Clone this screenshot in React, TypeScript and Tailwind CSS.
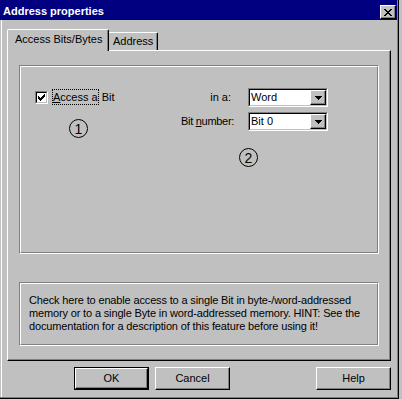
const raised = "border-t border-l border-t-white border-l-white border-r border-b border-r-black border-b-black shadow-[inset_-1px_-1px_0_#808080]";

const CheckMark = () => (
  <svg width="7" height="7" viewBox="0 0 7 7" shapeRendering="crispEdges">
    <rect x="6" y="0" width="1" height="1" fill="#000" />
    <rect x="5" y="1" width="2" height="1" fill="#000" />
    <rect x="0" y="2" width="1" height="1" fill="#000" />
    <rect x="4" y="2" width="3" height="1" fill="#000" />
    <rect x="0" y="3" width="2" height="1" fill="#000" />
    <rect x="3" y="3" width="3" height="1" fill="#000" />
    <rect x="0" y="4" width="5" height="1" fill="#000" />
    <rect x="1" y="5" width="3" height="1" fill="#000" />
    <rect x="2" y="6" width="1" height="1" fill="#000" />
  </svg>
);

const Combo = ({ value }: { value: string }) => (
  <div className="w-[80px] h-[19px] border-t border-l border-[#808080] border-r-white border-b-white border-r border-b">
    <div className="h-full border-t border-l border-t-black border-l-black border-r border-b border-r-[#c0c0c0] border-b-[#c0c0c0] bg-white flex">
      <div className="flex-1 pl-[1px] leading-[15px]">{value}</div>
      <div className={`w-[16px] h-[15px] bg-[#c0c0c0] flex items-center justify-center ${raised}`}>
        <svg width="7" height="4" viewBox="0 0 7 4" shapeRendering="crispEdges">
          <rect x="0" y="0" width="7" height="1" fill="#000" />
          <rect x="1" y="1" width="5" height="1" fill="#000" />
          <rect x="2" y="2" width="3" height="1" fill="#000" />
          <rect x="3" y="3" width="1" height="1" fill="#000" />
        </svg>
      </div>
    </div>
  </div>
);

const Circled = ({ n }: { n: string }) => (
  <div className="w-[19px] h-[19px] rounded-full border border-black flex items-center justify-center text-[14px] leading-none">
    {n}
  </div>
);

const Button = ({ label, isDefault }: { label: string; isDefault?: boolean }) =>
  isDefault ? (
    <div className="w-[75px] h-[23px] border border-black">
      <div className={`h-full flex items-center justify-center ${raised}`}>{label}</div>
    </div>
  ) : (
    <div className={`w-[75px] h-[23px] flex items-center justify-center ${raised}`}>{label}</div>
  );

export default function App() {
  return (
    <div className="w-[402px] h-[399px] bg-[#c0c0c0] overflow-hidden text-[11px] leading-[13px] text-black font-['Liberation_Sans',Arial,sans-serif]">
      <div className="w-[399px] h-[399px] border-r border-b border-black">
        <div className="h-full flex flex-col border-r border-b border-[#808080]">
          {/* Title bar */}
          <div className="h-[20px] bg-[#000080] flex items-start justify-between pl-[3px] pr-[1px]">
            <div className="pt-[5px] text-white font-bold">Address properties</div>
            <div className={`mt-[5px] w-[16px] h-[14px] bg-[#c0c0c0] flex items-center justify-center ${raised}`}>
              <svg width="8" height="7" viewBox="0 0 8 7" shapeRendering="crispEdges">
                <path d="M0 0h2v1h-2zM6 0h2v1h-2zM1 1h2v1h-2zM5 1h2v1h-2zM2 2h4v1h-4zM3 3h2v1h-2zM2 4h4v1h-4zM1 5h2v1h-2zM5 5h2v1h-2zM0 6h2v1h-2zM6 6h2v1h-2z" fill="#000" />
              </svg>
            </div>
          </div>

          {/* Body */}
          <div className="flex-1 ml-[1px] border-l border-white flex flex-col pt-[9px] pl-[5px] pr-[6px]">
            {/* Tabs */}
            <div className="flex items-end h-[21px]">
              <div className="relative z-10 -mb-[1px] w-[102px] h-[22px] bg-[#c0c0c0] border-l border-t border-white border-r border-r-black rounded-t-[2px] shadow-[inset_-1px_0_0_#808080] pl-[7px] pt-[3px]">
                Access Bits/Bytes
              </div>
              <div className="w-[49px] h-[18px] border-t border-white border-r border-r-black rounded-tr-[2px] shadow-[inset_-1px_0_0_#808080] pl-[4px] pt-[2px]">
                Address
              </div>
            </div>

            {/* Panel */}
            <div className="w-[384px] h-[311px] border-l border-t border-white border-r border-b border-r-black border-b-black shadow-[inset_-1px_-1px_0_#808080] pl-[11px] pt-[14px] flex flex-col">
              <div className="w-[360px] h-[189px] border-t border-l border-[#808080] border-r border-b border-r-white border-b-white">
                <div className="h-full border-t border-l border-white border-r border-b border-r-[#808080] border-b-[#808080] flex">
                  {/* Left column */}
                  <div className="w-[149px] pl-[14px] pt-[22px] flex flex-col">
                    <div className="flex items-start gap-[4px]">
                      <div className="mt-[2px] w-[13px] h-[13px] border-t border-l border-[#808080] border-r border-b border-r-white border-b-white">
                        <div className="h-full border-t border-l border-t-black border-l-black border-r border-b border-r-[#c0c0c0] border-b-[#c0c0c0] bg-white flex items-center justify-center">
                          <CheckMark />
                        </div>
                      </div>
                      <div className="flex">
                        <span className="border border-dotted border-black h-[16px] leading-[14px]">
                          <span className="underline">A</span>ccess a
                        </span>
                        <span className="leading-[16px] whitespace-pre"> Bit</span>
                      </div>
                    </div>
                    <div className="mt-[14px] ml-[34px]">
                      <Circled n="1" />
                    </div>
                  </div>

                  {/* Right column */}
                  <div className="pt-[21px] flex flex-col">
                    <div className="grid grid-cols-[64px_80px] gap-x-[14px] gap-y-[5px]">
                      <div className="text-right leading-[19px] pr-[3px]">in a:</div>
                      <Combo value="Word" />
                      <div className="text-right leading-[19px] whitespace-nowrap tracking-[-0.3px]">
                        Bit <span className="underline">n</span>umber:
                      </div>
                      <Combo value="Bit 0" />
                    </div>
                    <div className="mt-[17px] ml-[69px]">
                      <Circled n="2" />
                    </div>
                  </div>
                </div>
              </div>

              <div className="mt-[28px] w-[360px] h-[64px] border-t border-l border-[#808080] border-r border-b border-r-white border-b-white">
                <div className="h-full border-t border-l border-white border-r border-b border-r-[#808080] border-b-[#808080] pl-[8px] pt-[10px] whitespace-nowrap tracking-[-0.15px]">
                  Check here to enable access to a single Bit in byte-/word-addressed
                  <br />
                  memory or to a single Byte in word-addressed memory. HINT: See the
                  <br />
                  documentation for a description of this feature before using it!
                </div>
              </div>
            </div>

            {/* Buttons */}
            <div className="mt-[6px] flex pl-[67px]">
              <Button label="OK" isDefault />
              <div className="ml-[6px]">
                <Button label="Cancel" />
              </div>
              <div className="ml-auto">
                <Button label="Help" />
              </div>
            </div>
          </div>
        </div>
      </div>
    </div>
  );
}
